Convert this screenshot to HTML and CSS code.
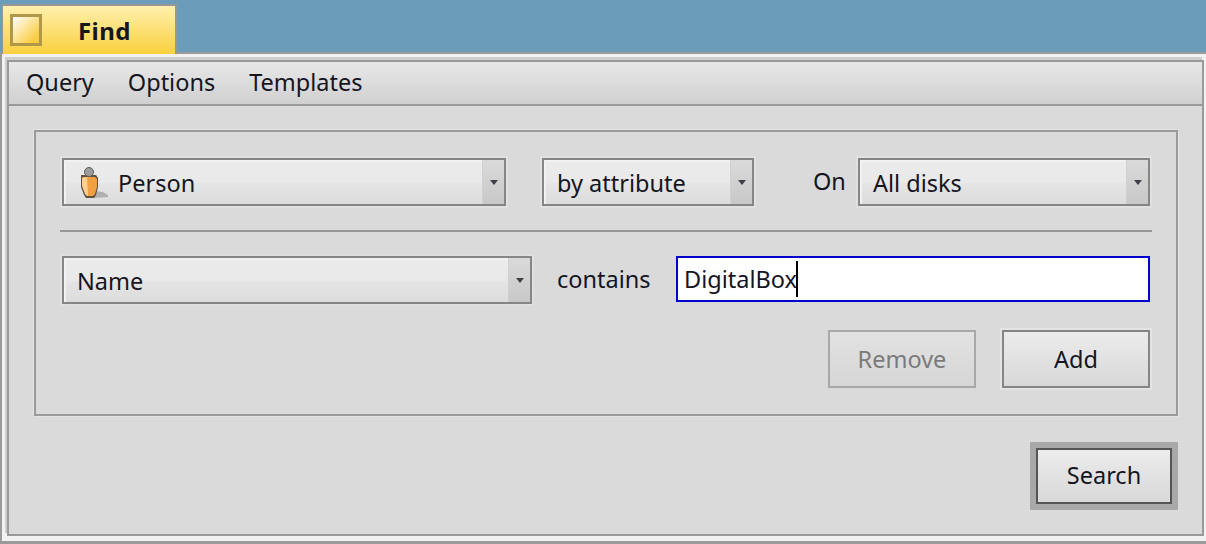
FILE: index.html
```html
<!DOCTYPE html>
<html lang="en">
<head>
<meta charset="utf-8">
<title>Find</title>
<link rel="stylesheet" href="styles.css">
</head>
<body>
<div class="tab">
  <span class="close"></span>
  <span class="tab-title">Find</span>
</div>
<div class="window">
  <div class="frame">
    <nav class="menu">
      <span>Query</span><span>Options</span><span>Templates</span>
    </nav>
    <main class="content">
      <section class="group">
        <div class="row row-top">
          <div class="select sel-person">
            <div class="sel-main">
              <svg class="person" width="32" height="34" viewBox="0 0 32 34">
                <path d="M17 25l9 1 5 3 0 2-14 1z" fill="#b0b0b0"/>
                <path d="M4 9h15l2 3v9l-2 8-2 3h-8l-2-3-3-8v-9z" fill="#5f5040"/>
                <path d="M5 11h13l2 2v8l-2 7-2 2h-5l-2-2-3-8v-7z" fill="#f0a040"/>
                <path d="M5 12l5-1 1 19h-1l-2-2-3-8z" fill="#fbcf90"/>
                <circle cx="12" cy="6" r="4.5" fill="#9c9c9c" stroke="#5f5f5f"/>
              </svg>
              <span>Person</span>
            </div>
            <div class="sel-arrow"><i></i></div>
          </div>
          <div class="select sel-attr">
            <div class="sel-main"><span>by attribute</span></div>
            <div class="sel-arrow"><i></i></div>
          </div>
          <span class="label label-on">On</span>
          <div class="select sel-disks">
            <div class="sel-main"><span>All disks</span></div>
            <div class="sel-arrow"><i></i></div>
          </div>
        </div>
        <hr class="sep">
        <div class="row row-mid">
          <div class="select sel-name">
            <div class="sel-main"><span>Name</span></div>
            <div class="sel-arrow"><i></i></div>
          </div>
          <span class="label label-contains">contains</span>
          <div class="input"><span class="value">DigitalBox<i class="caret"></i></span></div>
        </div>
        <div class="row row-btns">
          <div class="btn btn-disabled">Remove</div>
          <div class="btn">Add</div>
        </div>
      </section>
      <div class="footer">
        <div class="default-ring"><div class="btn btn-search">Search</div></div>
      </div>
    </main>
  </div>
</div>
</body>
</html>
```
FILE: styles.css
```css
* { box-sizing: border-box; }
html, body { margin: 0; height: 100%; }
body {
  width: 1206px;
  height: 544px;
  overflow: hidden;
  background: #6b9cb9;
  font-family: "Noto Sans", sans-serif;
  font-size: 23.5px;
  color: #15151f;
  padding-top: 4px;
  display: flex;
  flex-direction: column;
}
.tab {
  position: relative;
  z-index: 2;
  width: 175px;
  height: 50px;
  margin: 0 0 -2px 2px;
  border-top: 2px solid #979797;
  border-left: 1px solid #979797;
  border-right: 2px solid #979797;
  background: linear-gradient(#fff0ae 0%, #fad03e 100%);
  display: flex;
  align-items: flex-start;
  padding: 8px 0 0 7px;
}
.close {
  width: 32px;
  height: 32px;
  border: 3px solid #b0974a;
  background: linear-gradient(135deg, #ffffff 0%, #f9cd40 85%);
}
.tab-title {
  font-size: 24px;
  font-weight: 700;
  letter-spacing: 0.4px;
  margin-left: 36px;
  line-height: 33px;
}
.window {
  flex: 1;
  min-height: 0;
  border-top: 2px solid #9a9a9a;
  border-left: 2px solid #9a9a9a;
  border-bottom: 3px solid #9a9a9a;
  background: #f2f2f2;
  padding: 6px 2px 5px 5px;
}
.frame {
  height: 100%;
  background: #dadada;
  border: 2px solid #9a9a9a;
  box-shadow: -2px -3px 0 #cecece;
  display: flex;
  flex-direction: column;
}
.menu {
  height: 44px;
  flex: none;
  border-bottom: 2px solid #9a9a9a;
  background: linear-gradient(#e8e8e8, #d0d0d0);
  display: flex;
  gap: 34px;
  padding: 0 0 2px 17px;
  align-items: center;
  line-height: 40px;
}
.content {
  flex: 1;
  padding: 24px 24px 0 25px;
  display: flex;
  flex-direction: column;
}
.group {
  height: 286px;
  flex: none;
  border: 2px solid #9a9a9a;
  box-shadow: 1px 1px 0 #e4e4e4, -1px -1px 0 #e4e4e4;
  padding: 26px 24px 0 26px;
}
.row { display: flex; align-items: center; }
.row-top { height: 48px; }
.select {
  height: 48px;
  display: flex;
  border: 2px solid #868686;
  box-shadow: 0 0 0 2px #e0e0e0;
  flex: none;
}
.sel-main {
  flex: 1;
  display: flex;
  align-items: center;
  padding-left: 11px;
  background: linear-gradient(#ebebeb 0%, #e9e9e9 50%, #e5e5e5 50%, #dcdcdc 100%);
  border-left: 2px solid #f2f2f2;
  border-top: 2px solid #f2f2f2;
}
.sel-arrow {
  width: 22px;
  flex: none;
  background: linear-gradient(#dadada, #c8c8c8);
  border-left: 1px solid #d0d0d0;
  display: flex;
  align-items: center;
  justify-content: center;
}
.sel-arrow i {
  width: 0;
  height: 0;
  border-left: 4px solid transparent;
  border-right: 4px solid transparent;
  border-top: 5px solid #3f3f48;
}
.sel-person { width: 444px; }
.sel-person .sel-main { gap: 9px; }
.sel-attr { width: 212px; margin-left: 36px; }
.sel-disks { width: 292px; }
.label { flex: none; line-height: 40px; }
.label-on { width: 45px; margin-left: 59px; margin-top: -2px; }
.sep {
  width: 1092px;
  height: 2px;
  border: 0;
  margin: 24px 0 24px -2px;
  background: #979797;
}
.sel-name { width: 470px; }
.label-contains { width: 119px; margin-left: 25px; margin-top: -2px; }
.input {
  width: 474px;
  height: 46px;
  margin-top: -2px;
  border: 2px solid #0000cc;
  background: #fff;
  display: flex;
  align-items: center;
  padding-left: 6px;
}
.value { position: relative; line-height: 40px; }
.caret {
  position: absolute;
  right: -1px;
  top: 2px;
  width: 2px;
  height: 36px;
  background: #000;
}
.row-btns {
  justify-content: flex-end;
  gap: 26px;
  margin-top: 26px;
  padding-right: 2px;
}
.btn {
  width: 148px;
  height: 58px;
  border: 2px solid #868686;
  box-shadow: 0 0 0 2px #e4e4e4;
  background: linear-gradient(#ececec, #d8d8d8);
  display: flex;
  align-items: center;
  justify-content: center;
}
.btn-disabled {
  color: #7a7a7a;
  border-color: #a8a8a8;
  box-shadow: none;
  background: linear-gradient(#e2e2e2, #d6d6d6);
}
.footer {
  display: flex;
  justify-content: flex-end;
  margin-top: 26px;
}
.default-ring {
  width: 148px;
  height: 68px;
  border: 6px solid #a8a8a8;
  display: flex;
}
.btn-search {
  width: 136px;
  height: 56px;
  border-color: #555;
  box-shadow: none;
  padding-bottom: 2px;
}
```
